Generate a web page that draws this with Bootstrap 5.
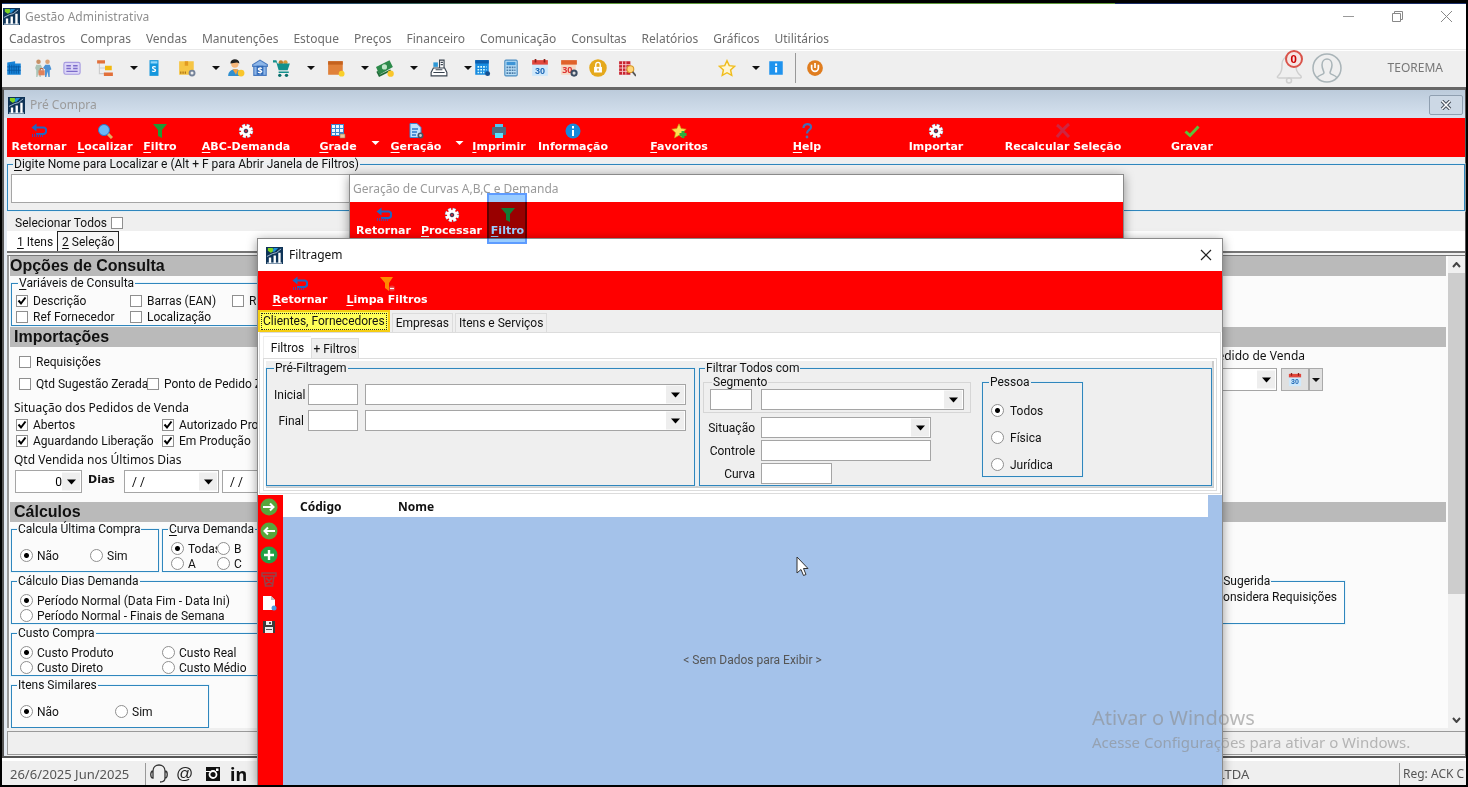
<!DOCTYPE html>
<html lang="pt-BR">
<head>
<meta charset="utf-8">
<meta name="viewport" content="width=device-width, initial-scale=1">
<title>Gestão Administrativa</title>
<link rel="stylesheet" href="https://cdn.jsdelivr.net/npm/bootstrap@5.3.0/dist/css/bootstrap.min.css">
<script src="https://cdn.jsdelivr.net/npm/bootstrap@5.3.0/dist/js/bootstrap.bundle.min.js"></script>
<style>
:root{--red:#ff0000;--face:#efefef;--rule:#2f86bd;--band:#bababa}
html,body{height:100%}
body{font:12px/16px "Noto Sans","Open Sans",sans-serif;color:#111;background:#000;padding:3px 2px 2px;overflow:hidden}
button{font:inherit;color:inherit;border:0;background:none;padding:0}
svg{display:block;flex:none}
u{text-decoration-thickness:1px;text-underline-offset:2px}
.f-tah,.f-ms{font-family:Roboto,"Liberation Sans",sans-serif;font-size:12px}
.f-seg{font-family:"Noto Sans","Open Sans",sans-serif;font-size:12px}
.app{background:var(--face)}
.strip{height:1px;flex:none;background:linear-gradient(90deg,#1d3f78 0 20%,#5f9a3c 40% 76%,#1b2f6a 76%)}
.app-title{height:25px;padding:0 13px 0 1px;color:#8f8f8f;background:#fff;font-size:12px;gap:5px}
.app-menu{height:21px;padding:0 7px;gap:15px;background:#fff;border-bottom:1px solid #e8e8e8}
.app-menu a{color:#6d6d6d;text-decoration:none}
.tools{height:37px;padding:0 0 2px 3px;border-top:1px solid #fff}
.tools button{width:18px;height:18px}
.tools .arr{width:10px;height:10px}
.tools .arr svg{margin:2px auto}
.sp4{margin-left:4px}.sp6{margin-left:6px}.sp11{margin-left:11px}.sp15{margin-left:15px}.sp82{margin-left:82px}
.vsep{width:1px;height:30px;background:#999;margin:0 10px}
.bell{position:relative;margin-right:7px}
.bell-n{position:absolute;left:10px;top:-2px;width:18px;height:18px;border:2px solid #d9534a;border-radius:50%;background:#f6e6e4;color:#c00;font-weight:700;line-height:14px;text-align:center;font-size:11px}
.child{border:solid #555;border-width:3px 1px 2px 2px;border-top-color:#666;background:#e4eaf2;padding-left:3px;min-height:0}
.child-title{height:28px;background:linear-gradient(#bccbdb,#d6e2ef);color:#9b9b9b;margin-left:-3px;padding:2px 2px 0 4px;gap:5px}
.child-close{width:34px;height:20px;border:1px solid #8f9fb0;border-radius:2px;background:#ccd8e5;display:grid;place-items:center}
.redbar{background:var(--red);color:#fff;font:bold 11px/16px "DejaVu Sans","Noto Sans",sans-serif;padding-top:5px;height:39px}
.redbar button{display:flex;flex-direction:column;align-items:center;white-space:nowrap}
.redbar svg{width:16px;height:16px}
.redbar button.arr{align-self:start;padding-top:17px}
.redbar .arr svg{width:9px;height:6px}
.arr svg{width:8px;height:6px}
.cols-main{display:grid;grid-template-columns:64px 68px 42px 130px 54px 20px 62px 24px 56px 92px 120px 136px 122px 132px 126px}
.grp{border:1px solid var(--rule);box-shadow:0 0 0 1px #d4eefa66;padding:0 4px;margin:0;min-width:0}
.grp>legend{float:none;width:auto;font-size:inherit;line-height:14px;height:14px;margin:0 0 0 2px;padding:0 1px;white-space:nowrap}
.box,.combo{border:1px solid #a5a5a5;background:#fff;height:21px;border-radius:0;padding:0 4px;display:block;min-width:0}
.combo{appearance:none;background:#fff url("data:image/svg+xml,%3Csvg xmlns='http://www.w3.org/2000/svg' viewBox='0 0 18 18'%3E%3Cpath fill='%23eee' d='M0 0h18v18H0z'/%3E%3Cpath d='M5 7h9l-4.500 5z'/%3E%3C/svg%3E") right 1px center/18px 100% no-repeat}
.opt{display:flex;align-items:center;gap:5px;height:16px;white-space:nowrap}
.opt input{appearance:none;flex:none;width:12px;height:12px;margin:0;border:1px solid #8f8f8f;background:#fff center/100% no-repeat}
.opt input[type=checkbox]:checked{background-image:url("data:image/svg+xml,%3Csvg xmlns='http://www.w3.org/2000/svg' viewBox='0 0 10 10'%3E%3Cpath d='M1.500 4.500l2.500 3 4.500-6' fill='none' stroke='%23000' stroke-width='2'/%3E%3C/svg%3E")}
.opt input[type=radio]{width:13px;height:13px;border-radius:50%}
.opt input[type=radio]:checked{background-image:radial-gradient(circle,#000 0 2px,transparent 3px)}
.find{padding:3px 3px 7px}
.find .box{width:567px;height:29px}
.selrow{height:20px;padding:3px 0 0 8px;gap:4px}
.pages{background:#fff;height:22px;border-bottom:2px solid #757575;padding-left:6px}
.pages button{padding:0 4px;height:19px}
.pages .on{border:1px solid #222;border-bottom:0;background:#f7f7f7;height:20px}
.work{background:#fbfbfb;border-top:1px solid #777;border-left:2px solid #999;margin-top:2px;padding-left:1px;min-height:0;overflow:hidden}
.band{background:var(--band);height:20px;font:bold 16px/19px "Liberation Sans",Arial,sans-serif;color:#111;padding-left:4px;margin:0;white-space:nowrap}
.band.first{padding-left:0}
.vars{width:520px;margin:0 0 1px 1px;padding:3px 4px 0}
.vars .r{display:grid;grid-template-columns:114px 102px auto}
.imp{padding:4px 0 9px 4px}
.tall{height:22px}
.calc{padding:0 0 0 1px;gap:2px}
.calc .grp{height:50px;padding:5px 8px 0}
.calc .grp>legend{margin-left:-3px}
.calc .opt{height:15px;gap:4px}
.calc .one{padding-top:12px}
.w148{width:148px}.w198{width:198px}.w520{width:520px}
.sb{width:17px;background:#f0f0f0;margin-left:2px}
.sb button{height:17px;display:grid;place-items:center}
.sb .thumb{background:#cdcdcd;height:68%}
.foot-panel{height:24px;border:1px solid #9a9a9a;border-right:0;margin:3px 0 1px;background:var(--face)}
.status{height:27px;font-size:13px;color:#555;border-top:3px solid #fff;padding-top:2px}
.status .cell{border-left:1px solid #999;padding-left:3px;white-space:nowrap;overflow:hidden}
.dlg{position:absolute;background:#fff;border:1px solid #8a8a8a;box-shadow:0 2px 10px #0006}
.dlg1{left:349px;right:344px;top:174px;bottom:500px;color:#9a9a9a}
.dlg1 .cap{height:27px;padding-left:3px}
.dlg2{left:257px;right:245px;top:238px;bottom:2px;border-bottom:0}
.dlg2 .cap{height:32px;padding:0 10px 0 8px;gap:6px}
.dlg2 .redbar{height:39px}
.hot{position:absolute;left:487px;top:193px;width:40px;height:51px;background:#99ccff;mix-blend-mode:multiply;border:2px solid #5e9cff}
.cols-cur{display:grid;grid-template-columns:67px 69px 43px}
.cols-fil{display:grid;grid-template-columns:84px 90px}
.tabs{height:22px;background:var(--face);gap:2px}
.tabs button{border:1px solid #dcdcdc;border-bottom:0;height:19px;padding:0 3px;white-space:nowrap}
.tabs .yel{height:22px;background:#ffff57;border:2px solid #f5cd12;padding:0 1px}
.tabs .yel span{display:block;border:1px dotted #222;height:17px;line-height:15px;padding:0 1px}
.sheet{border:1px solid #dcdcdc;margin:0 1px 1px;padding:3px 3px 2px}
.sub{height:22px}
.sub button{width:48px;height:20px;border:1px solid #dcdcdc;border-bottom:0;background:var(--face)}
.sub .on{background:#fff;height:22px;border-right:0;border-color:#eee}
.inner{border:1px solid #dcdcdc;padding:2px}
.panes{display:grid;grid-template-columns:429fr 513fr;background:var(--face);gap:4px;border-right:2px solid #ccc;border-bottom:2px solid #ccc}
.pre{padding:9px 8px 0 7px}
.pre .ln{display:grid;grid-template-columns:30px 50px 1fr;column-gap:4px;margin-bottom:5px;align-items:center}
.pre .ln select{margin-left:3px}
.right{text-align:right}
.all{padding:0 3px 1px}
.seg{border-color:#d6d6d6;box-shadow:none;width:268px;padding:0 6px 2px;display:block;margin-bottom:4px}
.seg>div{gap:9px}
.w42{width:42px}.w203{width:203px}.w71{width:71px}
.fields{display:grid;grid-template-columns:52px 170px;column-gap:6px;row-gap:2px;align-items:center}
.pes{width:101px;height:102px;margin-left:11px;padding:8px 8px 0}
.pes>legend{margin-left:-2px}
.pes .opt{height:27px;gap:6px}
.side{width:25px;background:var(--red);padding:3px 0 0 2px;gap:6px}
.side svg{width:18px;height:18px}
.gridbg{background:#a4c2ea;min-width:0}
.data{width:100%;border-collapse:collapse}
.data th{background:#fff;height:22px;padding:2px 0 0;font:bold 12px/20px "Noto Sans",sans-serif}
.data th:last-child{background:none;width:14px}
.data td{padding:135px 0 0;text-align:center;color:#555}
.cursor{position:absolute;left:796px;top:556px}
.wm{position:absolute;right:53px;bottom:34px;width:323px;color:#8c8c8c99;white-space:nowrap;pointer-events:none;font-size:15px;line-height:22px}
.wm b{display:block;font-weight:400;font-size:20px;line-height:26px}
.calbtn{border:1px solid #aaa;background:#e0e0e0;height:23px;display:grid;place-items:center}
</style>
</head>
<body class="d-flex flex-column">
<svg width="0" height="0" style="position:absolute" aria-hidden="true"><defs>
<symbol id="logo" viewBox="0 0 18 18"><path fill="#0e3357" d="M0 0h18v18H0z"/><path fill="#7ed321" d="M2 1h5l2 3-4 2-3-2z"/><path fill="#1f8fd6" d="M8 1h5l-4 4-2 0z"/><path fill="#fff" d="M3 11h2.500v6H3zM8 9h2.500v8H8zM13 6h2.500v11H13z"/><path d="M1 10l6-3 4-1 5-4" stroke="#cfe3f5" stroke-width=".8" fill="none"/><path d="M1 17h16" stroke="#e8f1fa"/></symbol>
<symbol id="arr" viewBox="0 0 8 6"><path fill="currentColor" d="M0 1h8L4 5z"/></symbol>
<symbol id="back" viewBox="0 0 16 16"><path d="M4 4.500h8.500a2.500 3 0 0 1 0 6.500H5" fill="none" stroke="#1f66c0" stroke-width="2.200"/><path fill="#1f66c0" d="M5.500 .5v8L.5 4.500z"/><path d="M1.500 11v3M3.500 11v3M5.500 11v3M7.500 11v3M9.500 12v2M11.500 12v2" stroke="#5a3f9c" stroke-width="1"/></symbol>
<symbol id="lens" viewBox="0 0 16 16"><path d="M10 10l5 5" stroke="#e0b060" stroke-width="3"/><circle cx="7" cy="7" r="5.500" fill="#6bb8f5" stroke="#2b78c8"/></symbol>
<symbol id="fun" viewBox="0 0 16 16"><path fill="#1f9a35" d="M1 1h14l-5 6v8l-4-2V7z"/></symbol>
<symbol id="gear" viewBox="0 0 16 16"><circle cx="8" cy="8" r="5" fill="none" stroke="#7a9cc0" stroke-width="4.500" stroke-dasharray="2.600 1.330"/><circle cx="8" cy="8" r="4" fill="#fff" stroke="#fff" stroke-width="2"/><circle cx="8" cy="8" r="5.500" fill="none" stroke="#fff" stroke-width="2.500" stroke-dasharray="2.800 1.520"/><circle cx="8" cy="8" r="1.800" fill="#b03040" stroke="#335"/></symbol>
<symbol id="grade" viewBox="0 0 16 16"><path fill="#3b86cf" d="M1 1h13v12H1z"/><path fill="#e9f5ff" d="M2 2h3v3H2zM6 2h3v3H6zM10 2h3v3h-3zM2 6h3v3H2zM6 6h3v3H6zM10 6h3v3h-3zM2 10h3v2H2zM6 10h3v2H6z"/><path fill="#f0c6a0" stroke="#975" stroke-width=".6" d="M10 11h5v4h-5z"/></symbol>
<symbol id="doc" viewBox="0 0 16 16"><path fill="#bfe2fb" stroke="#3b86cf" d="M2 .5h7l4 4v10H2z"/><path d="M4 6h6M4 9h5M4 12h4" stroke="#2b78c8" stroke-width="1.500"/><circle cx="12.500" cy="12.500" r="2.200" fill="#ccc" stroke="#456" stroke-width="1.600"/></symbol>
<symbol id="prn" viewBox="0 0 16 16"><path fill="#4fc3f0" d="M4 1h8v4H4z"/><rect x="1" y="4" width="14" height="8" rx="1" fill="#4d6b80"/><path fill="#5be0ff" d="M4 10h8v5H4z"/></symbol>
<symbol id="info" viewBox="0 0 16 16"><circle cx="8" cy="8" r="7.500" fill="#1689dc"/><path fill="#fff" d="M7 7h2v6H7zM7 3h2v2.500H7z"/></symbol>
<symbol id="fav" viewBox="0 0 16 16"><path fill="#ffe052" stroke="#c89a10" stroke-width=".7" d="M8 .8l2.200 4.800 5 .6-3.800 3.500 1 5.200L8 12.300l-4.500 2.600 1-5.200L.8 6.200l5-.6z"/><path d="M12 8v7M8.500 11.500h7" stroke="#2fae3d" stroke-width="3"/></symbol>
<symbol id="help" viewBox="0 0 16 16"><path d="M4.500 5c0-5 7.500-5 7.500-1 0 3-4 3-4 6.500" fill="none" stroke="#3f6fb8" stroke-width="2.200"/><circle cx="8" cy="14" r="1.400" fill="#4b72b5"/></symbol>
<symbol id="xx" viewBox="0 0 16 16"><path d="M2 2c4 3 7 7 12 12M14 1C9 5 6 9 2 14" stroke="#cf2440" stroke-width="3" fill="none"/></symbol>
<symbol id="ok" viewBox="0 0 16 16"><path d="M1.500 8.500l4.500 4 8.500-9" fill="none" stroke="#59c23a" stroke-width="3"/></symbol>
<symbol id="cal" viewBox="0 0 16 16"><path fill="#cfe8fb" d="M1 2h14v13H1z"/><path fill="#e2473c" d="M1 1h14v4H1z"/><path d="M4 0v3M12 0v3" stroke="#8f1f18" stroke-width="1.500"/><text x="8" y="13" font-size="8" font-weight="bold" fill="#1b66b5" text-anchor="middle" font-family="Liberation Sans">30</text></symbol>
</defs></svg>

<div class="app flex-grow-1 d-flex flex-column overflow-hidden">
  <div class="strip"></div>
  <header class="app-title d-flex align-items-center flex-shrink-0">
    <svg width="17" height="17"><use href="#logo"/></svg><span>Gestão Administrativa</span>
    <div class="ms-auto d-flex" style="gap:36px">
      <button aria-label="Minimizar"><svg width="13" height="13"><path d="M1 6.500h11" stroke="#999"/></svg></button>
      <button aria-label="Restaurar"><svg width="13" height="13" fill="none" stroke="#888"><path d="M1.500 3.500h8v8h-8zM3.500 3V1.500h8v8H10"/></svg></button>
      <button aria-label="Fechar"><svg width="13" height="13" stroke="#888"><path d="M1 1l11 11M12 1L1 12"/></svg></button>
    </div>
  </header>
  <nav class="app-menu d-flex align-items-center flex-shrink-0" aria-label="Menu principal">
    <a href="#">Cadastros</a><a href="#">Compras</a><a href="#">Vendas</a><a href="#">Manutenções</a><a href="#">Estoque</a><a href="#">Preços</a><a href="#">Financeiro</a><a href="#">Comunicação</a><a href="#">Consultas</a><a href="#">Relatórios</a><a href="#">Gráficos</a><a href="#">Utilitários</a>
  </nav>
  <div class="tools d-flex align-items-center flex-shrink-0">
    <button aria-label="Empresas"><svg width="18" height="18" viewBox="0 0 16 16"><path fill="#1683d8" d="M2 3l7-1v2h5v10H2z"/><path d="M4 5v8M6 5v8M8 5v8M10 6v7M12 6v7M2 7h12M2 10h12" stroke="#075aa5" stroke-width=".8"/></svg></button>
    <button class="sp11" aria-label="Clientes"><svg width="18" height="18" viewBox="0 0 16 16"><circle cx="4" cy="2.500" r="2" fill="#c89166"/><circle cx="12" cy="2.500" r="2" fill="#d9a378"/><path fill="#aac3b6" d="M2 5h4l1.500 3L6 9v7H5l-1-4-1 4H2V10L1 8z"/><path fill="#4b92d4" d="M10 5h4l1.500 4-1.500 1v6h-1.200L12 11l-1 5H9.800V9L8 8z"/><path fill="#e0815a" d="M4 10h5.500v4.500H4z"/><path d="M5.500 10V8.500h2.500V10" fill="none" stroke="#b9562f" stroke-width=".8"/></svg></button>
    <button class="sp11" aria-label="Cartões"><svg width="18" height="18" viewBox="0 0 16 16"><rect x=".8" y="3" width="14.400" height="10.500" rx="1.500" fill="#dcd6f7" stroke="#a79be0"/><path d="M3 6h4M3 8.500h4M9 6h4M9 8.500h4M3 11h10" stroke="#7c6ccb" stroke-width="1.300"/></svg></button>
    <button class="sp15" aria-label="Plano"><svg width="18" height="18" viewBox="0 0 16 16"><path d="M3 3v10h6M3 8h6" stroke="#ccc" fill="none"/><path fill="#e2703a" d="M1 1h7v3H1zM7 12h8v3H7z"/><path fill="#f2b90f" d="M8 6h6v4H8z"/></svg></button>
    <button class="arr sp15" aria-label="Mais"><svg><use href="#arr"/></svg></button>
    <button class="sp6" aria-label="Preço"><svg width="18" height="18" viewBox="0 0 16 16"><path fill="#1597dd" d="M4 1h8v14H4z"/><path fill="#8fd6fa" d="M5 2h6v2H5z"/><text x="8" y="11.500" text-anchor="middle" font-size="8" font-weight="bold" fill="#fff">S</text></svg></button>
    <button class="sp15" aria-label="Pacotes"><svg width="18" height="18" viewBox="0 0 16 16"><path fill="#f6c544" d="M1 2h13v12H1z"/><path fill="#e29a20" d="M6 2h3v4H6z"/><path d="M2 12h5" stroke="#a56d10" stroke-width="2" stroke-dasharray="1 1"/><circle cx="12.500" cy="12.500" r="2.200" fill="#eee" stroke="#75839a" stroke-width="1.700"/></svg></button>
    <button class="arr sp15" aria-label="Mais"><svg><use href="#arr"/></svg></button>
    <button class="sp6" aria-label="Vendedor"><svg width="18" height="18" viewBox="0 0 16 16"><circle cx="7" cy="4.500" r="3.300" fill="#f6b77b"/><path fill="#222" d="M3 4c0-5 8-5 8 0L9 3z"/><path fill="#2f8fd0" d="M1 15c0-8 12-8 12 0z"/><path fill="#f9a23b" d="M5 9h5l-2 5z"/><circle cx="12.500" cy="12.500" r="3" fill="#f9c62b"/></svg></button>
    <button class="sp6" aria-label="Banco"><svg width="18" height="18" viewBox="0 0 16 16"><path fill="#8db6e8" stroke="#4779bf" d="M1.500 5L8 1l6.500 4v1.500h-13zM2.500 6.500h11v8h-11z"/><path fill="#316ab8" d="M5 6h6v8H5z"/><text x="8" y="13" text-anchor="middle" font-size="8" font-weight="bold" fill="#fff">$</text></svg></button>
    <button class="sp4" aria-label="Carrinho"><svg width="18" height="18" viewBox="0 0 16 16"><circle cx="7" cy="3" r="2" fill="#bb7c2c"/><circle cx="11" cy="3" r="2" fill="#d89a3c"/><path fill="#12908c" d="M0 1h3l1 3h11l-2 6H5L3 3H0zM5 11h9v1.500H5z"/><circle cx="6" cy="14.500" r="1.500" fill="#0b6f6c"/><circle cx="12" cy="14.500" r="1.500" fill="#0b6f6c"/></svg></button>
    <button class="arr sp15" aria-label="Mais"><svg><use href="#arr"/></svg></button>
    <button class="sp11" aria-label="Caixa"><svg width="18" height="18" viewBox="0 0 16 16"><path fill="#e0813a" d="M1 2h13v12H1z"/><path fill="#c4621f" d="M1 2h13v3H1z"/><circle cx="13" cy="13" r="2.600" fill="#f9d02b"/></svg></button>
    <button class="arr sp15" aria-label="Mais"><svg><use href="#arr"/></svg></button>
    <button class="sp6" aria-label="Dinheiro"><svg width="18" height="18" viewBox="0 0 16 16"><path fill="#2c8a4a" d="M0 7l12-6 3 6-12 7z"/><circle cx="7.500" cy="7" r="2.300" fill="#bfe6c8"/><path d="M1 11l2 4 10-5" stroke="#1e6b37" fill="none" stroke-width="1.500"/><circle cx="13" cy="13" r="2.800" fill="#f9c62b"/></svg></button>
    <button class="arr sp15" aria-label="Mais"><svg><use href="#arr"/></svg></button>
    <button class="sp11" aria-label="Registradora"><svg width="18" height="18" viewBox="0 0 16 16"><path fill="#fff" stroke="#39434f" d="M3 8h10l2 4v3H1v-3zM8.500 1h4v7h-4z"/><path fill="#2e98d6" d="M3 3h4v4H3z"/><path d="M3 12h10M9.500 3h2M9.500 5h2M5 9.500h6" stroke="#39434f"/></svg></button>
    <button class="arr sp15" aria-label="Mais"><svg><use href="#arr"/></svg></button>
    <button aria-label="Agenda"><svg width="18" height="18" viewBox="0 0 16 16"><path fill="#178be0" d="M2 1h12v13H2z"/><path fill="#0b5cab" d="M2 1h12v3H2z"/><path d="M4 7h8M4 9.500h8M4 12h6" stroke="#dff" stroke-width="1.400" stroke-dasharray="1.500 1"/><circle cx="13" cy="13" r="2.200" fill="#15508f"/></svg></button>
    <button class="sp11" aria-label="Calculadora"><svg width="18" height="18" viewBox="0 0 16 16"><rect x="2.500" y="1" width="11" height="14" rx="1" fill="#b9def6" stroke="#4a8cc0"/><path fill="#3d94d6" d="M4 2.500h8v3H4z"/><path d="M4 7.500h8M4 10h8M4 12.500h8" stroke="#4a7ba8" stroke-width="1.500" stroke-dasharray="1.600 .7"/></svg></button>
    <button class="sp11" aria-label="Calendário"><svg width="18" height="18"><use href="#cal"/></svg></button>
    <button class="sp11" aria-label="Agenda de tarefas"><svg width="18" height="18" viewBox="0 0 16 16"><path fill="#f6d9c4" d="M1 2h13v12H1z"/><path fill="#e0622a" d="M1 1h14v4H1z"/><text x="6.500" y="12.500" font-size="8" font-weight="bold" fill="#d33" text-anchor="middle">30</text><circle cx="12.500" cy="12.500" r="2.300" fill="#ddd" stroke="#3c4d63" stroke-width="1.800"/></svg></button>
    <button class="sp11" aria-label="Bloquear"><svg width="18" height="18" viewBox="0 0 16 16"><circle cx="8" cy="8" r="7.800" fill="#e5a91c"/><path fill="#fff" d="M4.500 7h7v5h-7z"/><path d="M6 7V5a2 2 0 0 1 4 0v2" fill="none" stroke="#fff" stroke-width="1.200"/><path d="M8 8.500v2" stroke="#c58a00"/></svg></button>
    <button class="sp11" aria-label="Pesquisa"><svg width="18" height="18" viewBox="0 0 16 16"><path fill="#c8242f" d="M1 2h10v12H1z"/><path d="M4 2v12M7 2v12M1 5h10M1 8h10M1 11h10" stroke="#f8c9cc" stroke-width=".8"/><circle cx="11" cy="9" r="3" fill="#ffd67a" stroke="#d99a2b"/><path d="M13 11.500l3 3.500" stroke="#555" stroke-width="1.600"/></svg></button>
    <button class="sp82" aria-label="Favoritos"><svg width="18" height="18" viewBox="0 0 16 16"><path fill="#fff6d2" stroke="#f0bd1c" stroke-width="1.300" d="M8 1.500l2 4.400 4.800.6-3.600 3.300 1 4.700L8 12.200l-4.200 2.300 1-4.700L1.200 6.500l4.800-.6z"/></svg></button>
    <button class="arr sp15" aria-label="Mais"><svg><use href="#arr"/></svg></button>
    <button class="sp6" aria-label="Informações"><svg width="18" height="18" viewBox="0 0 16 16"><path fill="#1f93ee" d="M2 2h12v12H2z"/><path fill="#fff" d="M7.200 7h1.800v5H7.200zM7.200 4H9v2H7.200z"/></svg></button>
    <span class="vsep"></span>
    <button aria-label="Sair"><svg width="18" height="18" viewBox="0 0 16 16"><circle cx="8" cy="8" r="7" fill="#e07d1f"/><path d="M5 5v3a3 3 0 0 0 6 0V5M8 3.500v4.500" fill="none" stroke="#fff" stroke-width="1.500"/></svg></button>
    <div class="ms-auto d-flex align-items-center" style="padding-right:23px">
      <div class="bell"><svg width="30" height="32" viewBox="0 0 30 32" fill="none" stroke="#cfcfcf" stroke-width="1.500"><path d="M3 24c4-4 4-7 4-12 0-4 3-7 6-8 4 0 8 3 8 8s0 8 5 12c1 2-1 2-2 2H4c-2 0-2-1-1-2z"/><circle cx="14" cy="28.500" r="2.500"/></svg><span class="bell-n">0</span></div>
      <svg width="30" height="30" viewBox="0 0 30 30" fill="none" stroke="#a9b4b8" stroke-width="1.500"><circle cx="15" cy="15" r="14"/><path d="M5 25c1-3 6-3 7-5 0-2-2-4-2-8 0-8 10-8 10 0 0 4-2 6-2 8 1 2 6 2 7 5"/></svg>
      <span style="color:#777;margin-left:46px">TEOREMA</span>
    </div>
  </div>

  <main class="child flex-grow-1 d-flex flex-column">
    <div class="child-title d-flex align-items-center flex-shrink-0"><svg width="17" height="17"><use href="#logo"/></svg><span>Pré Compra</span><button class="child-close ms-auto" aria-label="Fechar"><svg width="12" height="10" viewBox="0 0 12 10"><path d="M2 1l8 8M10 1L2 9" stroke="#444c58" stroke-width="3.500"/><path d="M2 1l8 8M10 1L2 9" stroke="#fff" stroke-width="1.500"/></svg></button></div>
    <div class="redbar cols-main flex-shrink-0">
      <button><svg><use href="#back"/></svg><span>Retornar</span></button>
      <button><svg><use href="#lens"/></svg><span><u>L</u>ocalizar</span></button>
      <button><svg><use href="#fun"/></svg><span><u>F</u>iltro</span></button>
      <button><svg><use href="#gear"/></svg><span><u>A</u>BC-Demanda</span></button>
      <button><svg><use href="#grade"/></svg><span><u>G</u>rade</span></button>
      <button class="arr" aria-label="Mais grade"><svg><use href="#arr"/></svg></button>
      <button><svg><use href="#doc"/></svg><span><u>G</u>eração</span></button>
      <button class="arr" aria-label="Mais geração"><svg><use href="#arr"/></svg></button>
      <button><svg><use href="#prn"/></svg><span><u>I</u>mprimir</span></button>
      <button><svg><use href="#info"/></svg><span>Informação</span></button>
      <button><svg><use href="#fav"/></svg><span><u>F</u>avoritos</span></button>
      <button><svg><use href="#help"/></svg><span><u>H</u>elp</span></button>
      <button><svg><use href="#gear"/></svg><span>Importar</span></button>
      <button><svg><use href="#xx"/></svg><span>Recalcular Seleção</span></button>
      <button><svg><use href="#ok"/></svg><span>Gravar</span></button>
    </div>
    <div class="app flex-grow-1 d-flex flex-column f-tah" style="min-height:0">
      <fieldset class="grp find"><legend><label for="q"><u>D</u>igite Nome para Localizar e (Alt + F para Abrir Janela de Filtros)</label></legend>
        <div class="d-flex"><input id="q" class="box"><label class="opt ms-2"><input type="checkbox" aria-label="Exato"></label></div></fieldset>
      <label class="opt selrow f-ms">Selecionar Todos <input type="checkbox"></label>
      <div class="pages d-flex align-items-end f-ms"><button><u>1</u> Itens</button><button class="on"><u>2</u> Seleção</button></div>
      <div class="work flex-grow-1 d-flex">
        <div class="flex-grow-1">
          <h2 class="band first">Opções de Consulta</h2>
          <fieldset class="grp vars f-ms"><legend><u>V</u>ariáveis de Consulta</legend>
            <div class="r"><label class="opt"><input type="checkbox" checked>Descrição</label><label class="opt"><input type="checkbox">Barras (EAN)</label><label class="opt"><input type="checkbox">Referência</label></div>
            <div class="r"><label class="opt"><input type="checkbox">Ref Fornecedor</label><label class="opt"><input type="checkbox">Localização</label></div>
          </fieldset>
          <h2 class="band">Importações</h2>
          <div class="d-flex">
            <div class="imp f-ms">
              <label class="opt tall" style="padding-left:5px"><input type="checkbox">Requisições</label>
              <div style="display:grid;grid-template-columns:128px auto;padding-left:5px"><label class="opt tall"><input type="checkbox">Qtd Sugestão Zerada</label><label class="opt tall"><input type="checkbox">Ponto de Pedido Zerado</label></div>
              <div class="f-seg" style="padding-top:5px;height:22px">Situação dos Pedidos de Venda</div>
              <div style="display:grid;grid-template-columns:146px auto;padding-left:2px"><label class="opt"><input type="checkbox" checked>Abertos</label><label class="opt"><input type="checkbox" checked>Autorizado Produção</label><label class="opt"><input type="checkbox" checked>Aguardando Liberação</label><label class="opt"><input type="checkbox" checked>Em Produção</label></div>
              <div class="f-seg" style="height:21px;line-height:21px">Qtd Vendida nos Últimos Dias</div>
              <div class="d-flex f-tah" style="gap:6px;padding-left:1px">
                <select class="combo right" style="width:67px;height:23px;padding-right:19px" aria-label="Dias"><option>0</option></select><b style="width:30px;font:bold 11px/20px 'DejaVu Sans',sans-serif">Dias</b>
                <select class="combo" style="width:95px;height:23px;padding-left:7px" aria-label="De"><option>/  /</option></select><select class="combo" style="width:95px;height:23px;margin-left:-3px;padding-left:7px" aria-label="Até"><option>/  /</option></select>
              </div>
            </div>
            <div class="ms-auto f-seg" style="margin-right:123px">
              <div style="line-height:18px;height:21px;padding-right:18px;text-align:right">Data do Pedido de Venda</div>
              <div class="d-flex justify-content-end"><select class="combo" style="width:95px;height:23px;margin-right:4px" aria-label="Data"><option></option></select><button class="calbtn" style="width:28px" aria-label="Calendário"><svg width="14" height="14"><use href="#cal"/></svg></button><button class="calbtn arr" style="width:14px" aria-label="Mais"><svg><use href="#arr"/></svg></button></div>
            </div>
          </div>
          <h2 class="band">Cálculos</h2>
          <div class="d-flex justify-content-between">
            <div class="calc d-flex flex-column">
              <div class="d-flex" style="gap:3px">
                <fieldset class="grp w148 one"><legend>Calcula Última Compra</legend><div class="d-flex"><label class="opt" style="width:70px"><input type="radio" name="uc" checked>Não</label><label class="opt"><input type="radio" name="uc">Sim</label></div></fieldset>
                <fieldset class="grp" style="width:150px"><legend><u>C</u>urva Demanda</legend><div style="display:grid;grid-template-columns:46px auto"><label class="opt overflow-hidden"><input type="radio" name="cd" checked>Todas</label><label class="opt"><input type="radio" name="cd">B</label><label class="opt"><input type="radio" name="cd">A</label><label class="opt"><input type="radio" name="cd">C</label></div></fieldset>
              </div>
              <fieldset class="grp w520"><legend>Cálculo Dias Demanda</legend><label class="opt"><input type="radio" name="dd" checked>Período Normal (Data Fim - Data Ini)</label><label class="opt"><input type="radio" name="dd">Período Normal - Finais de Semana</label></fieldset>
              <fieldset class="grp w520"><legend>Custo Compra</legend><div style="display:grid;grid-template-columns:142px auto"><label class="opt"><input type="radio" name="cc" checked>Custo Produto</label><label class="opt"><input type="radio" name="cc">Custo Real</label><label class="opt"><input type="radio" name="cc">Custo Direto</label><label class="opt"><input type="radio" name="cc">Custo Médio</label></div></fieldset>
              <fieldset class="grp w198 one"><legend>Itens Similares</legend><div class="d-flex"><label class="opt" style="width:95px"><input type="radio" name="is" checked>Não</label><label class="opt"><input type="radio" name="is">Sim</label></div></fieldset>
            </div>
            <div class="f-ms" style="padding-top:52px;margin-right:101px"><fieldset class="grp" style="height:50px;padding:1px 7px 0"><legend>Qtd Sugerida</legend><label class="opt"><input type="checkbox">Considera Requisições</label></fieldset></div>
          </div>
        </div>
        <div class="sb d-flex flex-column"><button aria-label="Subir"><svg width="9" height="6"><path d="M1 5l3.500-4L8 5" fill="none" stroke="#444" stroke-width="2"/></svg></button><div class="thumb"></div><button class="mt-auto" aria-label="Descer"><svg width="9" height="6"><path d="M1 1l3.500 4L8 1" fill="none" stroke="#444" stroke-width="2"/></svg></button></div>
      </div>
      <div class="foot-panel flex-shrink-0"></div>
    </div>
  </main>
  <footer class="status d-flex align-items-stretch flex-shrink-0">
    <span class="d-flex align-items-center" style="width:143px;padding-left:8px">26/6/2025 Jun/2025</span>
    <div class="cell d-flex align-items-center" style="gap:7px">
      <a href="#" aria-label="Suporte"><svg width="20" height="20" viewBox="0 0 20 20" fill="none" stroke="#333" stroke-width="1.300"><path d="M4 7c0-8 12-8 12 0M4 7c-3 0-3 7 0 7zM16 7c3 0 3 7 0 7zM16 14c0 3-2 4-5 4"/></svg></a>
      <a href="#" style="color:#222;text-decoration:none;width:20px;font:17px/20px 'Liberation Sans',sans-serif">@</a>
      <a href="#" aria-label="Instagram"><svg width="20" height="20" viewBox="0 0 20 20"><path fill="#111" d="M3 3h14v14H3z"/><circle cx="10" cy="10.500" r="3.500" fill="none" stroke="#fff" stroke-width="1.800"/><path fill="#fff" d="M13 4.500h2.500V7H13zM3 7h4v1H3z"/></svg></a>
      <a href="#" style="color:#111;text-decoration:none;font:bold 18px/22px 'Noto Sans',sans-serif">in</a>
    </div>
    <span class="cell ms-auto d-flex align-items-center" style="width:185px">LTDA</span>
    <span class="cell d-flex align-items-center" style="width:67px;font-size:12px">Reg: ACK C</span>
  </footer>
</div>

<section class="dlg dlg1 overflow-hidden" aria-label="Geração de Curvas">
  <div class="cap d-flex align-items-center">Geração de Curvas A,B,C e Demanda</div>
  <div class="redbar cols-cur"><button><svg><use href="#back"/></svg><span>Retornar</span></button><button><svg><use href="#gear"/></svg><span><u>P</u>rocessar</span></button><button><svg><use href="#fun"/></svg><span><u>F</u>iltro</span></button></div>
</section>

<section class="dlg dlg2 d-flex flex-column" aria-label="Filtragem">
  <div class="cap d-flex align-items-center flex-shrink-0"><svg width="17" height="17"><use href="#logo"/></svg>Filtragem<button class="ms-auto" aria-label="Fechar"><svg width="12" height="12" stroke="#222" stroke-width="1.200"><path d="M1 1l10 10M11 1L1 11"/></svg></button></div>
  <div class="redbar cols-fil flex-shrink-0"><button><svg><use href="#back"/></svg><span><u>R</u>etornar</span></button><button><svg viewBox="0 0 16 16"><path fill="#ff8a00" d="M1 1h13l-4 6v8l-4-3V7z"/><circle cx="13" cy="12.500" r="3" fill="#e33"/><path d="M11 12.500h4" stroke="#fff" stroke-width="1.300"/></svg><span><u>L</u>impa Filtros</span></button></div>
  <div class="tabs d-flex align-items-end flex-shrink-0 f-ms"><button class="yel"><span>Clientes, Fornecedores</span></button><button>Empresas</button><button>Itens e Serviços</button></div>
  <div class="sheet flex-shrink-0 f-ms">
    <div class="sub d-flex align-items-end"><button class="on">Filtros</button><button>+ Filtros</button></div>
    <div class="inner"><div class="panes">
      <fieldset class="grp pre"><legend style="margin-left:0">Pré-Filtragem</legend>
        <div class="ln"><label for="i1" class="right f-tah">Inicial</label><input id="i1" class="box"><select class="combo" aria-label="Nome inicial"><option></option></select></div>
        <div class="ln"><label for="i2" class="right f-tah">Final</label><input id="i2" class="box"><select class="combo" aria-label="Nome final"><option></option></select></div>
      </fieldset>
      <fieldset class="grp all"><legend>Filtrar Todos com</legend>
        <div class="d-flex"><div>
          <fieldset class="grp seg"><legend>Segmento</legend><div class="d-flex"><input class="box w42" aria-label="Código do segmento"><select class="combo w203" aria-label="Segmento"><option></option></select></div></fieldset>
          <div class="fields f-tah"><label class="right" for="s1">Situação</label><select id="s1" class="combo"><option></option></select><label class="right" for="s2">Controle</label><input id="s2" class="box"><label class="right" for="s3">Curva</label><input id="s3" class="box w71"></div>
        </div>
        <fieldset class="grp pes"><legend>Pessoa</legend><label class="opt"><input type="radio" name="p" checked>Todos</label><label class="opt"><input type="radio" name="p">Física</label><label class="opt"><input type="radio" name="p">Jurídica</label></fieldset></div>
      </fieldset>
    </div></div>
  </div>
  <div class="flex-grow-1 d-flex overflow-hidden">
    <div class="side d-flex flex-column align-items-start">
      <button aria-label="Adicionar"><svg viewBox="0 0 18 18"><circle cx="9" cy="9" r="8.500" fill="#58a63c"/><path d="M3 9h10M10 5.500L13.500 9 10 12.500" fill="none" stroke="#fff" stroke-width="2"/></svg></button>
      <button aria-label="Remover"><svg viewBox="0 0 18 18"><circle cx="9" cy="9" r="8.500" fill="#58a63c"/><path d="M15 9H5M8 5.500L4.500 9 8 12.500" fill="none" stroke="#fff" stroke-width="2"/></svg></button>
      <button aria-label="Novo"><svg viewBox="0 0 18 18"><circle cx="9" cy="9" r="8.500" fill="#23a045"/><path d="M9 4v10M4 9h10" stroke="#fff" stroke-width="2.400"/></svg></button>
      <button aria-label="Excluir"><svg viewBox="0 0 18 18" fill="none" stroke="#96424a" stroke-width="1.500"><path d="M2 3h14v3H2zM4 6l1.500 10h7L14 6M6 8l6 6M12 8l-6 6"/></svg></button>
      <button aria-label="Abrir"><svg viewBox="0 0 18 18"><path fill="#fff" d="M3 2h8l4 4v10H3z"/><path fill="#bbb" d="M11 2v4h4z"/><circle cx="14" cy="14" r="2.500" fill="#4b9be0"/></svg></button>
      <button aria-label="Salvar"><svg viewBox="0 0 18 18"><path fill="#3b3b3b" d="M3 3h12v12H3z"/><path fill="#eee" d="M6 3h6v4H6zM5 9h8v6H5z"/><path fill="#555" d="M9 4h2v2H9zM6 11h6v1H6z"/></svg></button>
    </div>
    <div class="gridbg flex-grow-1"><table class="data f-ms"><thead><tr><th style="width:17px" aria-label="Seleção"></th><th style="width:98px">Código</th><th>Nome</th><th aria-hidden="true"></th></tr></thead><tbody><tr><td colspan="4">&lt; Sem Dados para Exibir &gt;</td></tr></tbody></table></div>
  </div>
</section>
<div class="hot"></div>
<svg class="cursor" width="13" height="21" viewBox="0 0 13 21"><path d="M1 1v16l4-3.500 2.500 6 2.500-1-2.500-6H12z" fill="#fff" stroke="#333"/></svg>
<div class="wm"><b>Ativar o Windows</b>Acesse Configurações para ativar o Windows.</div>
</body>
</html>
